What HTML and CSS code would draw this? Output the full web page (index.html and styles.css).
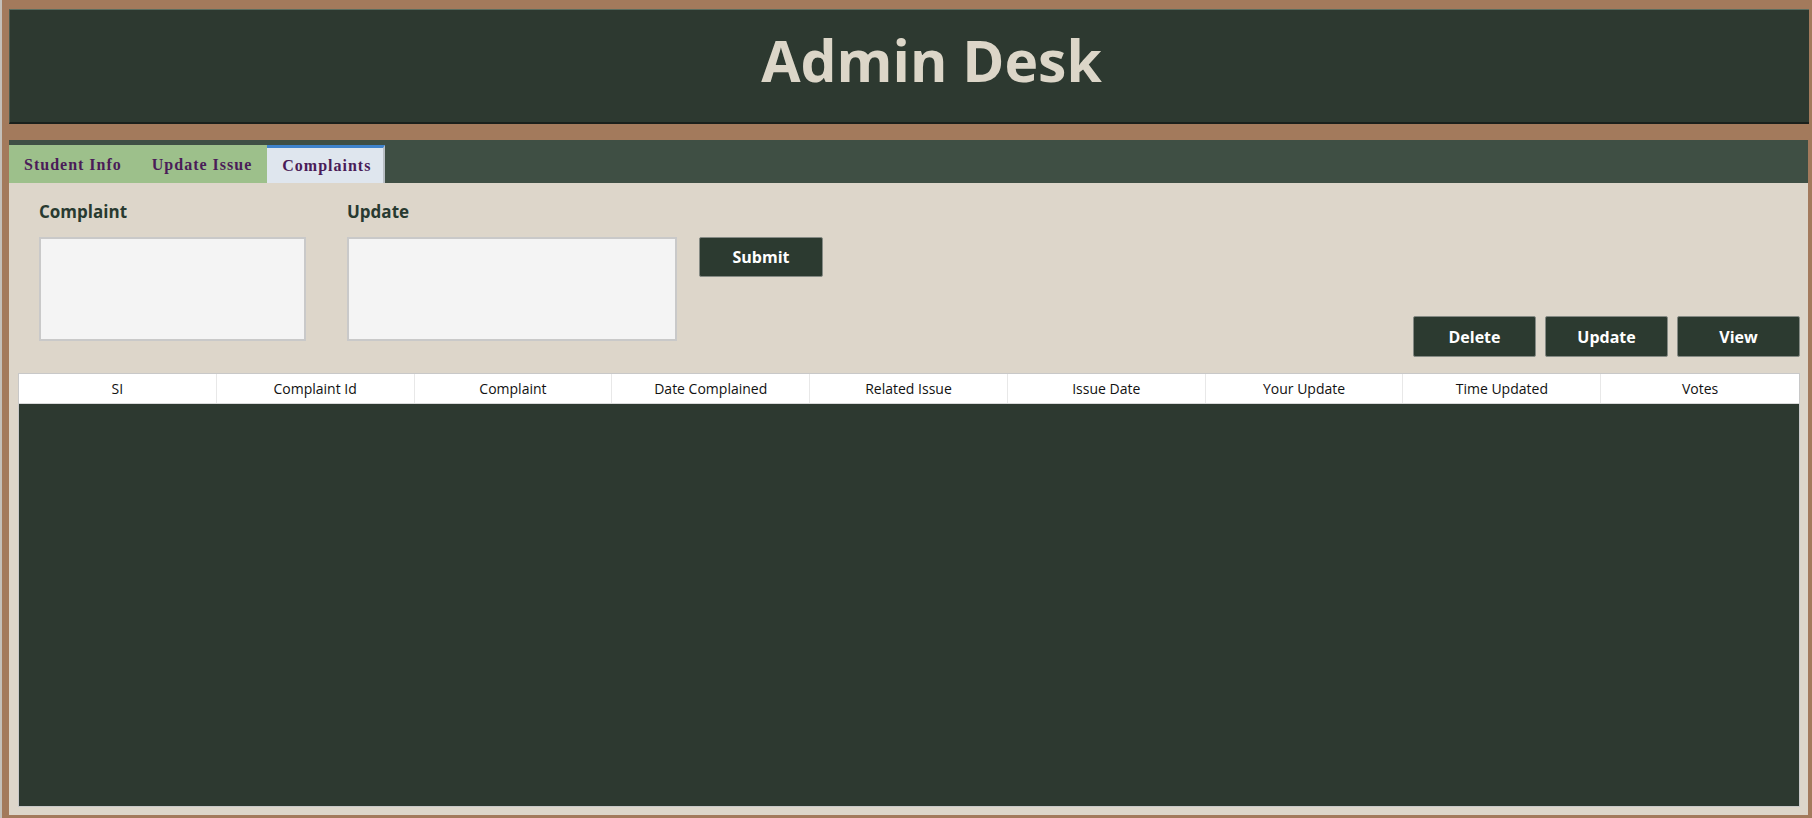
FILE: index.html
```html
<!DOCTYPE html>
<html lang="en">
<head>
<meta charset="utf-8">
<title>Admin Desk</title>
<link rel="stylesheet" href="styles.css">
</head>
<body>
<header class="banner">
  <h1 class="banner-title">Admin Desk</h1>
</header>
<main class="panel">
  <nav class="tabbar">
    <div class="tab">Student Info</div>
    <div class="tab">Update Issue</div>
    <div class="tab tab-active">Complaints</div>
  </nav>
  <section class="panel-body">
    <div class="top">
      <div class="fields">
        <div class="field field-complaint">
          <label class="field-label">Complaint</label>
          <textarea class="field-box"></textarea>
        </div>
        <div class="field field-update">
          <label class="field-label">Update</label>
          <textarea class="field-box"></textarea>
        </div>
        <button class="btn btn-submit">Submit</button>
      </div>
      <div class="actions">
        <button class="btn">Delete</button>
        <button class="btn">Update</button>
        <button class="btn">View</button>
      </div>
    </div>
    <div class="grid">
      <div class="grid-head">
        <div class="cell">SI</div>
        <div class="cell">Complaint Id</div>
        <div class="cell">Complaint</div>
        <div class="cell">Date Complained</div>
        <div class="cell">Related Issue</div>
        <div class="cell">Issue Date</div>
        <div class="cell">Your Update</div>
        <div class="cell">Time Updated</div>
        <div class="cell">Votes</div>
      </div>
      <div class="grid-body"></div>
    </div>
  </section>
</main>
</body>
</html>
```
FILE: styles.css
```css
* { box-sizing: border-box; }
html, body { height: 100%; }
body {
  margin: 0;
  background: #a37a5c;
  border-left: 2px solid #c4c0ba;
  padding: 9px 4px 3px 7px;
  display: flex;
  flex-direction: column;
  font-family: "Open Sans", "Liberation Sans", sans-serif;
  overflow: hidden;
}
.banner {
  height: 115px;
  flex: none;
  background: #2d3930;
  border-top: 1px solid #5b6d5f;
  border-left: 1px solid #4a5a4e;
  border-bottom: 2px solid #1a201c;
  display: flex;
  align-items: center;
  justify-content: center;
  padding-left: 44px;
  margin-right: -1px;
}
.banner-title {
  margin: 0;
  font-size: 57px;
  font-weight: 700;
  color: #dcd6c8;
  line-height: 1;
  padding-bottom: 11px;
}
.panel {
  margin-top: 16px;
  flex: 1;
  display: flex;
  flex-direction: column;
  min-height: 0;
}
.tabbar {
  height: 43px;
  flex: none;
  background: #3f4f44;
  display: flex;
  align-items: flex-end;
}
.tab {
  height: 38px;
  padding: 1px 15px 0;
  background: #9dc08b;
  color: #4a1c58;
  font-family: "Liberation Serif", "Times New Roman", serif;
  font-weight: 700;
  font-size: 16px;
  letter-spacing: 1px;
  display: flex;
  align-items: center;
}
.tab-active {
  background: #dfe6ee;
  border-top: 3px solid #3f83cc;
  border-right: 2px solid #b8bec4;
  padding: 0 12px 0 15px;
}
.panel-body {
  flex: 1;
  background: #ddd6ca;
  padding: 17px 8px 8px 9px;
  display: flex;
  flex-direction: column;
  min-height: 0;
}
.top {
  height: 157px;
  flex: none;
  display: flex;
  justify-content: space-between;
  padding-left: 21px;
}
.fields {
  display: flex;
  align-items: flex-start;
}
.field {
  display: flex;
  flex-direction: column;
}
.field-complaint { width: 267px; margin-right: 41px; }
.field-update { width: 330px; margin-right: 22px; }
.field-label {
  font-size: 17px;
  font-weight: 700;
  color: #283a30;
  line-height: 23px;
  height: 23px;
  margin-bottom: 14px;
}
.field-box {
  display: block;
  width: 100%;
  height: 104px;
  margin: 0;
  background: #f4f4f4;
  border: 2px solid #c9c9c9;
  resize: none;
  outline: none;
}
.btn {
  width: 123px;
  height: 40px;
  background: #2c3a30;
  color: #ffffff;
  border: 1px solid #858a84;
  border-radius: 2px;
  font-family: "Open Sans", "Liberation Sans", sans-serif;
  font-size: 16px;
  font-weight: 700;
  padding: 0;
}
.btn-submit {
  width: 124px;
  margin-top: 37px;
}
.actions {
  align-self: flex-end;
  display: flex;
  gap: 9px;
}
.actions .btn { height: 41px; }
.grid {
  margin-top: 16px;
  flex: 1;
  display: flex;
  flex-direction: column;
  border: 1px solid #c8c8c8;
  min-height: 0;
}
.grid-head {
  height: 30px;
  flex: none;
  display: grid;
  grid-template-columns: repeat(9, 1fr);
  background: #ffffff;
  border-bottom: 1px solid #d9d9d9;
}
.cell {
  display: flex;
  align-items: center;
  justify-content: center;
  font-size: 14px;
  color: #111;
  border-right: 1px solid #e8e8e8;
}
.cell:last-child { border-right: none; }
.grid-body {
  flex: 1;
  background: #2d3930;
}
```
